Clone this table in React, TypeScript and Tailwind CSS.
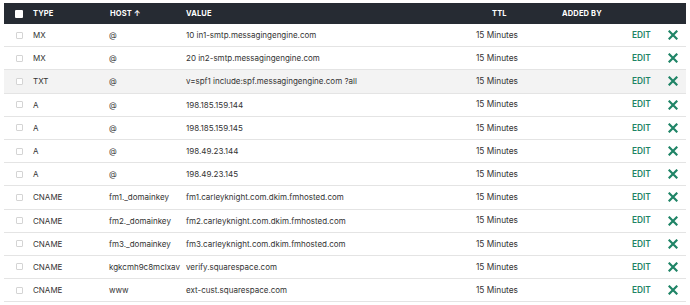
import React from "react";

type DnsRecord = {
  type: string;
  host: string;
  value: string;
  highlight?: boolean;
};

const records: DnsRecord[] = [
  { type: "MX", host: "@", value: "10 in1-smtp.messagingengine.com" },
  { type: "MX", host: "@", value: "20 in2-smtp.messagingengine.com" },
  { type: "TXT", host: "@", value: "v=spf1 include:spf.messagingengine.com ?all", highlight: true },
  { type: "A", host: "@", value: "198.185.159.144" },
  { type: "A", host: "@", value: "198.185.159.145" },
  { type: "A", host: "@", value: "198.49.23.144" },
  { type: "A", host: "@", value: "198.49.23.145" },
  { type: "CNAME", host: "fm1._domainkey", value: "fm1.carleyknight.com.dkim.fmhosted.com" },
  { type: "CNAME", host: "fm2._domainkey", value: "fm2.carleyknight.com.dkim.fmhosted.com" },
  { type: "CNAME", host: "fm3._domainkey", value: "fm3.carleyknight.com.dkim.fmhosted.com" },
  { type: "CNAME", host: "kgkcmh9c8mclxav", value: "verify.squarespace.com" },
  { type: "CNAME", host: "www", value: "ext-cust.squarespace.com" },
];

const RemoveIcon = () => (
  <svg width="10" height="10" viewBox="0 0 10 10" className="text-[#1f8466]">
    <path d="M1.5 1.5 L8.5 8.5 M8.5 1.5 L1.5 8.5" stroke="currentColor" strokeWidth="2.2" strokeLinecap="square" />
  </svg>
);

export default function App() {
  return (
    <div className="w-[690px] h-[305px] bg-white pt-[3px] px-[4px] font-['Inter','Liberation_Sans',sans-serif] overflow-hidden">
      {/* Header */}
      <div className="flex items-center h-[21px] bg-[#262b33] text-white text-[7.5px] font-bold tracking-[0.02em]">
        <div className="w-[29px] flex justify-center pl-[1px]">
          <span className="w-[8px] h-[8px] bg-white rounded-[1px]" />
        </div>
        <div className="w-[77px]">TYPE</div>
        <div className="w-[76px]">HOST ↑</div>
        <div className="w-[290px]">VALUE</div>
        <div className="w-[86px] pl-[16px]">TTL</div>
        <div className="flex-1">ADDED BY</div>
      </div>

      {/* Rows */}
      {records.map((r, i) => (
        <div
          key={i}
          className={`flex items-center h-[23.2px] border-b border-[#e4e4e4] text-[8px] text-[#333] ${
            r.highlight ? "bg-[#f3f3f3]" : "bg-white"
          }`}
        >
          <div className="w-[29px] flex justify-center pl-[1px]">
            <span className="w-[7px] h-[7px] border border-[#d4d4d4] rounded-[1px] bg-white" />
          </div>
          <div className="w-[76px]">{r.type}</div>
          <div className="w-[77px]">{r.host}</div>
          <div className="w-[290px]">{r.value}</div>
          <div className="w-[86px] text-[8.3px]">15 Minutes</div>
          <div className="flex-1" />
          <div className="w-[32px] text-[#1f8466] font-semibold text-[8.3px]">EDIT</div>
          <div className="w-[22px] flex justify-center pr-[4px]">
            <RemoveIcon />
          </div>
        </div>
      ))}
    </div>
  );
}
